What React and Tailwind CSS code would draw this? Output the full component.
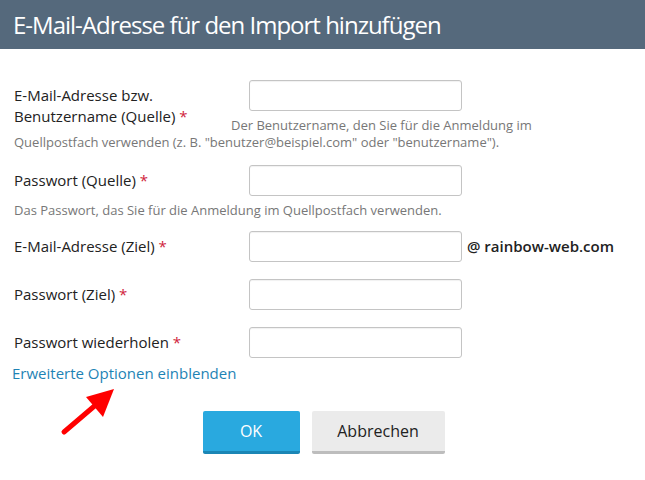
import React from "react";

const fieldRows = [
  {
    label: ["E-Mail-Adresse bzw.", "Benutzername (Quelle)"],
    help: 'Der Benutzername, den Sie für die Anmeldung im Quellpostfach verwenden (z. B. "benutzer@beispiel.com" oder "benutzername").',
    gap: "mb-[14px]",
  },
  {
    label: ["Passwort (Quelle)"],
    help: "Das Passwort, das Sie für die Anmeldung im Quellpostfach verwenden.",
    gap: "mb-[12px]",
  },
  { label: ["E-Mail-Adresse (Ziel)"], suffix: "@ rainbow-web.com", gap: "mb-[17px]" },
  { label: ["Passwort (Ziel)"], gap: "mb-[17px]" },
  { label: ["Passwort wiederholen"], gap: "mb-[4px]" },
];

function Row({ label, help, suffix, gap }) {
  return (
    <div className={`flow-root ${gap}`}>
      {/* label floats so the help text can wrap around it */}
      <label className="float-left w-[217px] pt-[5px] text-[15px] leading-[21px] text-[#222]">
        {label.map((line, i) => (
          <span key={i} className="block">
            {line}
            {i === label.length - 1 && <span className="text-[#d0223c]"> *</span>}
          </span>
        ))}
      </label>
      <div className="flex items-center">
        <input
          type="text"
          className="ml-[18px] h-[31px] w-[213px] shrink-0 rounded-[3px] border border-[#c4c4c4] bg-white shadow-[inset_0_1px_1px_rgba(0,0,0,0.06)] outline-none"
        />
        {suffix && (
          <span className="ml-[5px] shrink-0 whitespace-nowrap text-[15px] font-semibold text-[#222]">
            {suffix}
          </span>
        )}
      </div>
      {help && (
        <p className="mt-[6px] text-[13px] leading-[17px] text-[#777]">{help}</p>
      )}
    </div>
  );
}

export default function App() {
  return (
    <div className="relative h-[480px] w-[645px] overflow-hidden bg-white font-['Open_Sans',sans-serif]">
      <div className="flex h-[49px] items-center bg-[#55697c] px-[13px]">
        <h1 className="text-[24px] leading-none tracking-[-1px] text-white">
          E-Mail-Adresse für den Import hinzufügen
        </h1>
      </div>

      <div className="pl-[14px] pr-[26px] pt-[31px]">
        {fieldRows.map((row, i) => (
          <Row key={i} {...row} />
        ))}

        <a href="#" className="-ml-[2px] block text-[15px] leading-[22px] text-[#1e83b5]">
          Erweiterte Optionen einblenden
        </a>

        <div className="mt-[27px] flex justify-center gap-[12px] pl-[14px]">
          <button className="h-[43px] w-[97px] rounded-[2px] border-b-[3px] border-[#1b86b5] bg-[#29a9df] text-[16px] text-white">
            OK
          </button>
          <button className="h-[43px] w-[133px] rounded-[2px] border-b-[3px] border-[#bdbdbd] bg-[#ebebeb] text-[16px] text-[#222]">
            Abbrechen
          </button>
        </div>
      </div>

      {/* red annotation arrow */}
      <svg className="absolute left-[58px] top-[385px]" width="62" height="54" viewBox="0 0 62 54">
        <line x1="6" y1="47" x2="40" y2="18" stroke="#f00" strokeWidth="5" strokeLinecap="round" />
        <polygon points="56,4 45,32 28,12" fill="#f00" />
      </svg>
    </div>
  );
}
